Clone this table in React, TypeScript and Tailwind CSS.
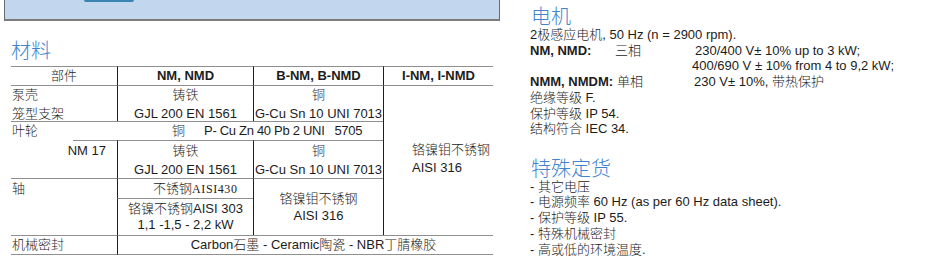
import React from "react";

const H = "border-t border-t-[#8f8f8f]";
const V = "border-l border-l-[#1e1e1e]";

export default function App() {
  return (
    <div className="w-[943px] h-[266px] bg-white overflow-hidden flex font-['Liberation_Sans','Noto_Sans_CJK_SC',sans-serif] font-light text-[13px] text-[#1c1c1c]">
      {/* Left column */}
      <div className="ml-[4px] w-[496px] flex flex-col">
        <div className="h-[21px] bg-[#c2d6ee] border-x border-x-[#6a6a6a] border-b-2 border-b-[#7c7c7c]">
          <div className="ml-[79px] w-[50px] h-[2px] rounded-b-[2px] bg-[#3a84b4]" />
        </div>
        <div className="mt-[18px] ml-[7px] text-[20px] leading-[24px] text-[#3f84cf]">材料</div>
        <div className="mt-[3px] ml-[7px] grid grid-cols-[106px_136px_130px_110px] grid-rows-[19px_36px_19px_38px_20px_37px_20px]">
          {/* header */}
          <div className={`col-start-1 row-start-1 ${H} flex items-center justify-center`}>部件</div>
          <div className={`col-start-2 row-start-1 ${H} ${V} flex items-center justify-center font-bold`}>NM, NMD</div>
          <div className={`col-start-3 row-start-1 ${H} ${V} flex items-center justify-center font-bold`}>B-NM, B-NMD</div>
          <div className={`col-start-4 row-start-1 ${H} ${V} flex items-center justify-center font-bold`}>I-NM, I-NMD</div>

          {/* row 2 */}
          <div className={`col-start-1 row-start-2 ${H} flex flex-col justify-center pl-[1px] leading-[19px]`}>
            <span>泵壳</span>
            <span>笼型支架</span>
          </div>
          <div className={`col-start-2 row-start-2 ${H} ${V} flex flex-col items-center justify-center leading-[19px]`}>
            <span>铸铁</span>
            <span>GJL 200 EN 1561</span>
          </div>
          <div className={`col-start-3 row-start-2 ${H} ${V} flex flex-col items-center justify-center leading-[19px]`}>
            <span>铜</span>
            <span>G-Cu Sn 10 UNI 7013</span>
          </div>
          <div className={`col-start-4 row-start-2 row-span-5 ${H} ${V} pt-[55px] pl-[28px] leading-[18px] flex flex-col`}>
            <span>铬镍钼不锈钢</span>
            <span>AISI 316</span>
          </div>

          {/* row 3 */}
          <div className={`col-start-1 col-span-3 row-start-3 ${H} flex items-center`}>
            <span className="w-[106px] pl-[1px]">叶轮</span>
            <span className="ml-[55px]">铜</span>
            <span className="ml-[19px] whitespace-pre tracking-[-0.3px]">P- Cu Zn 40 Pb 2 UNI   5705</span>
          </div>

          {/* row 4 */}
          <div className="col-start-1 row-start-4 flex flex-col">
            <div className="ml-[62px] h-px bg-[#8f8f8f]" />
            <div className="text-right pr-[11px] leading-[19px]">NM 17</div>
          </div>
          <div className={`col-start-2 row-start-4 ${H} ${V} flex flex-col items-center justify-center leading-[19px]`}>
            <span>铸铁</span>
            <span>GJL 200 EN 1561</span>
          </div>
          <div className={`col-start-3 row-start-4 ${H} ${V} flex flex-col items-center justify-center leading-[19px]`}>
            <span>铜</span>
            <span>G-Cu Sn 10 UNI 7013</span>
          </div>

          {/* rows 5-6 */}
          <div className={`col-start-1 row-start-5 row-span-2 ${H} pl-[1px] leading-[19px]`}>轴</div>
          <div className={`col-start-2 row-start-5 ${H} ${V} flex items-center pl-[35px]`}>
            <span>不锈钢</span>
            <span className="font-['Liberation_Serif',serif] text-[12px] tracking-[0.6px]">AISI430</span>
          </div>
          <div className={`col-start-2 row-start-6 ${H} ${V} flex flex-col items-center justify-center leading-[16px]`}>
            <span>铬镍不锈钢AISI 303</span>
            <span>1,1 -1,5 - 2,2 kW</span>
          </div>
          <div className={`col-start-3 row-start-5 row-span-2 ${H} ${V} flex flex-col items-center justify-center leading-[17px]`}>
            <span>铬镍钼不锈钢</span>
            <span>AISI 316</span>
          </div>

          {/* row 7 */}
          <div className={`col-start-1 row-start-7 ${H} border-b border-b-[#8f8f8f] flex items-center pl-[1px]`}>机械密封</div>
          <div className={`col-start-2 col-span-3 row-start-7 ${H} ${V} border-b border-b-[#8f8f8f] flex items-center justify-center pl-[16px]`}>
            Carbon石墨 - Ceramic陶瓷 - NBR丁腈橡胶
          </div>
        </div>
      </div>

      {/* Right column */}
      <div className="ml-[30px] pt-[7px] flex flex-col">
        <div className="pl-[1px] text-[20px] leading-[20px] text-[#3f84cf]">电机</div>
        <div className="leading-[15.5px] whitespace-nowrap">
          <div>2极感应电机, 50 Hz (n = 2900 rpm).</div>
          <div className="flex">
            <span className="w-[85px] font-bold">NM, NMD:</span>
            <span className="w-[80px]">三相</span>
            <span>230/400 V± 10% up to 3 kW;</span>
          </div>
          <div className="pl-[162px]">400/690 V ± 10% from 4 to 9,2 kW;</div>
          <div className="flex">
            <span className="w-[87px] font-bold">NMM, NMDM:</span>
            <span className="w-[77px]">单相</span>
            <span>230 V± 10%, 带热保护</span>
          </div>
          <div className="mt-[1px]">绝缘等级 F.</div>
          <div>保护等级 IP 54.</div>
          <div>结构符合 IEC 34.</div>
        </div>
        <div className="mt-[22px] pl-[1px] text-[20px] leading-[20px] text-[#3f84cf]">特殊定货</div>
        <div className="leading-[15.75px] whitespace-nowrap">
          <div>- 其它电压</div>
          <div>- 电源频率 60 Hz (as per 60 Hz data sheet).</div>
          <div>- 保护等级 IP 55.</div>
          <div>- 特殊机械密封</div>
          <div>- 高或低的环境温度.</div>
        </div>
      </div>
    </div>
  );
}
